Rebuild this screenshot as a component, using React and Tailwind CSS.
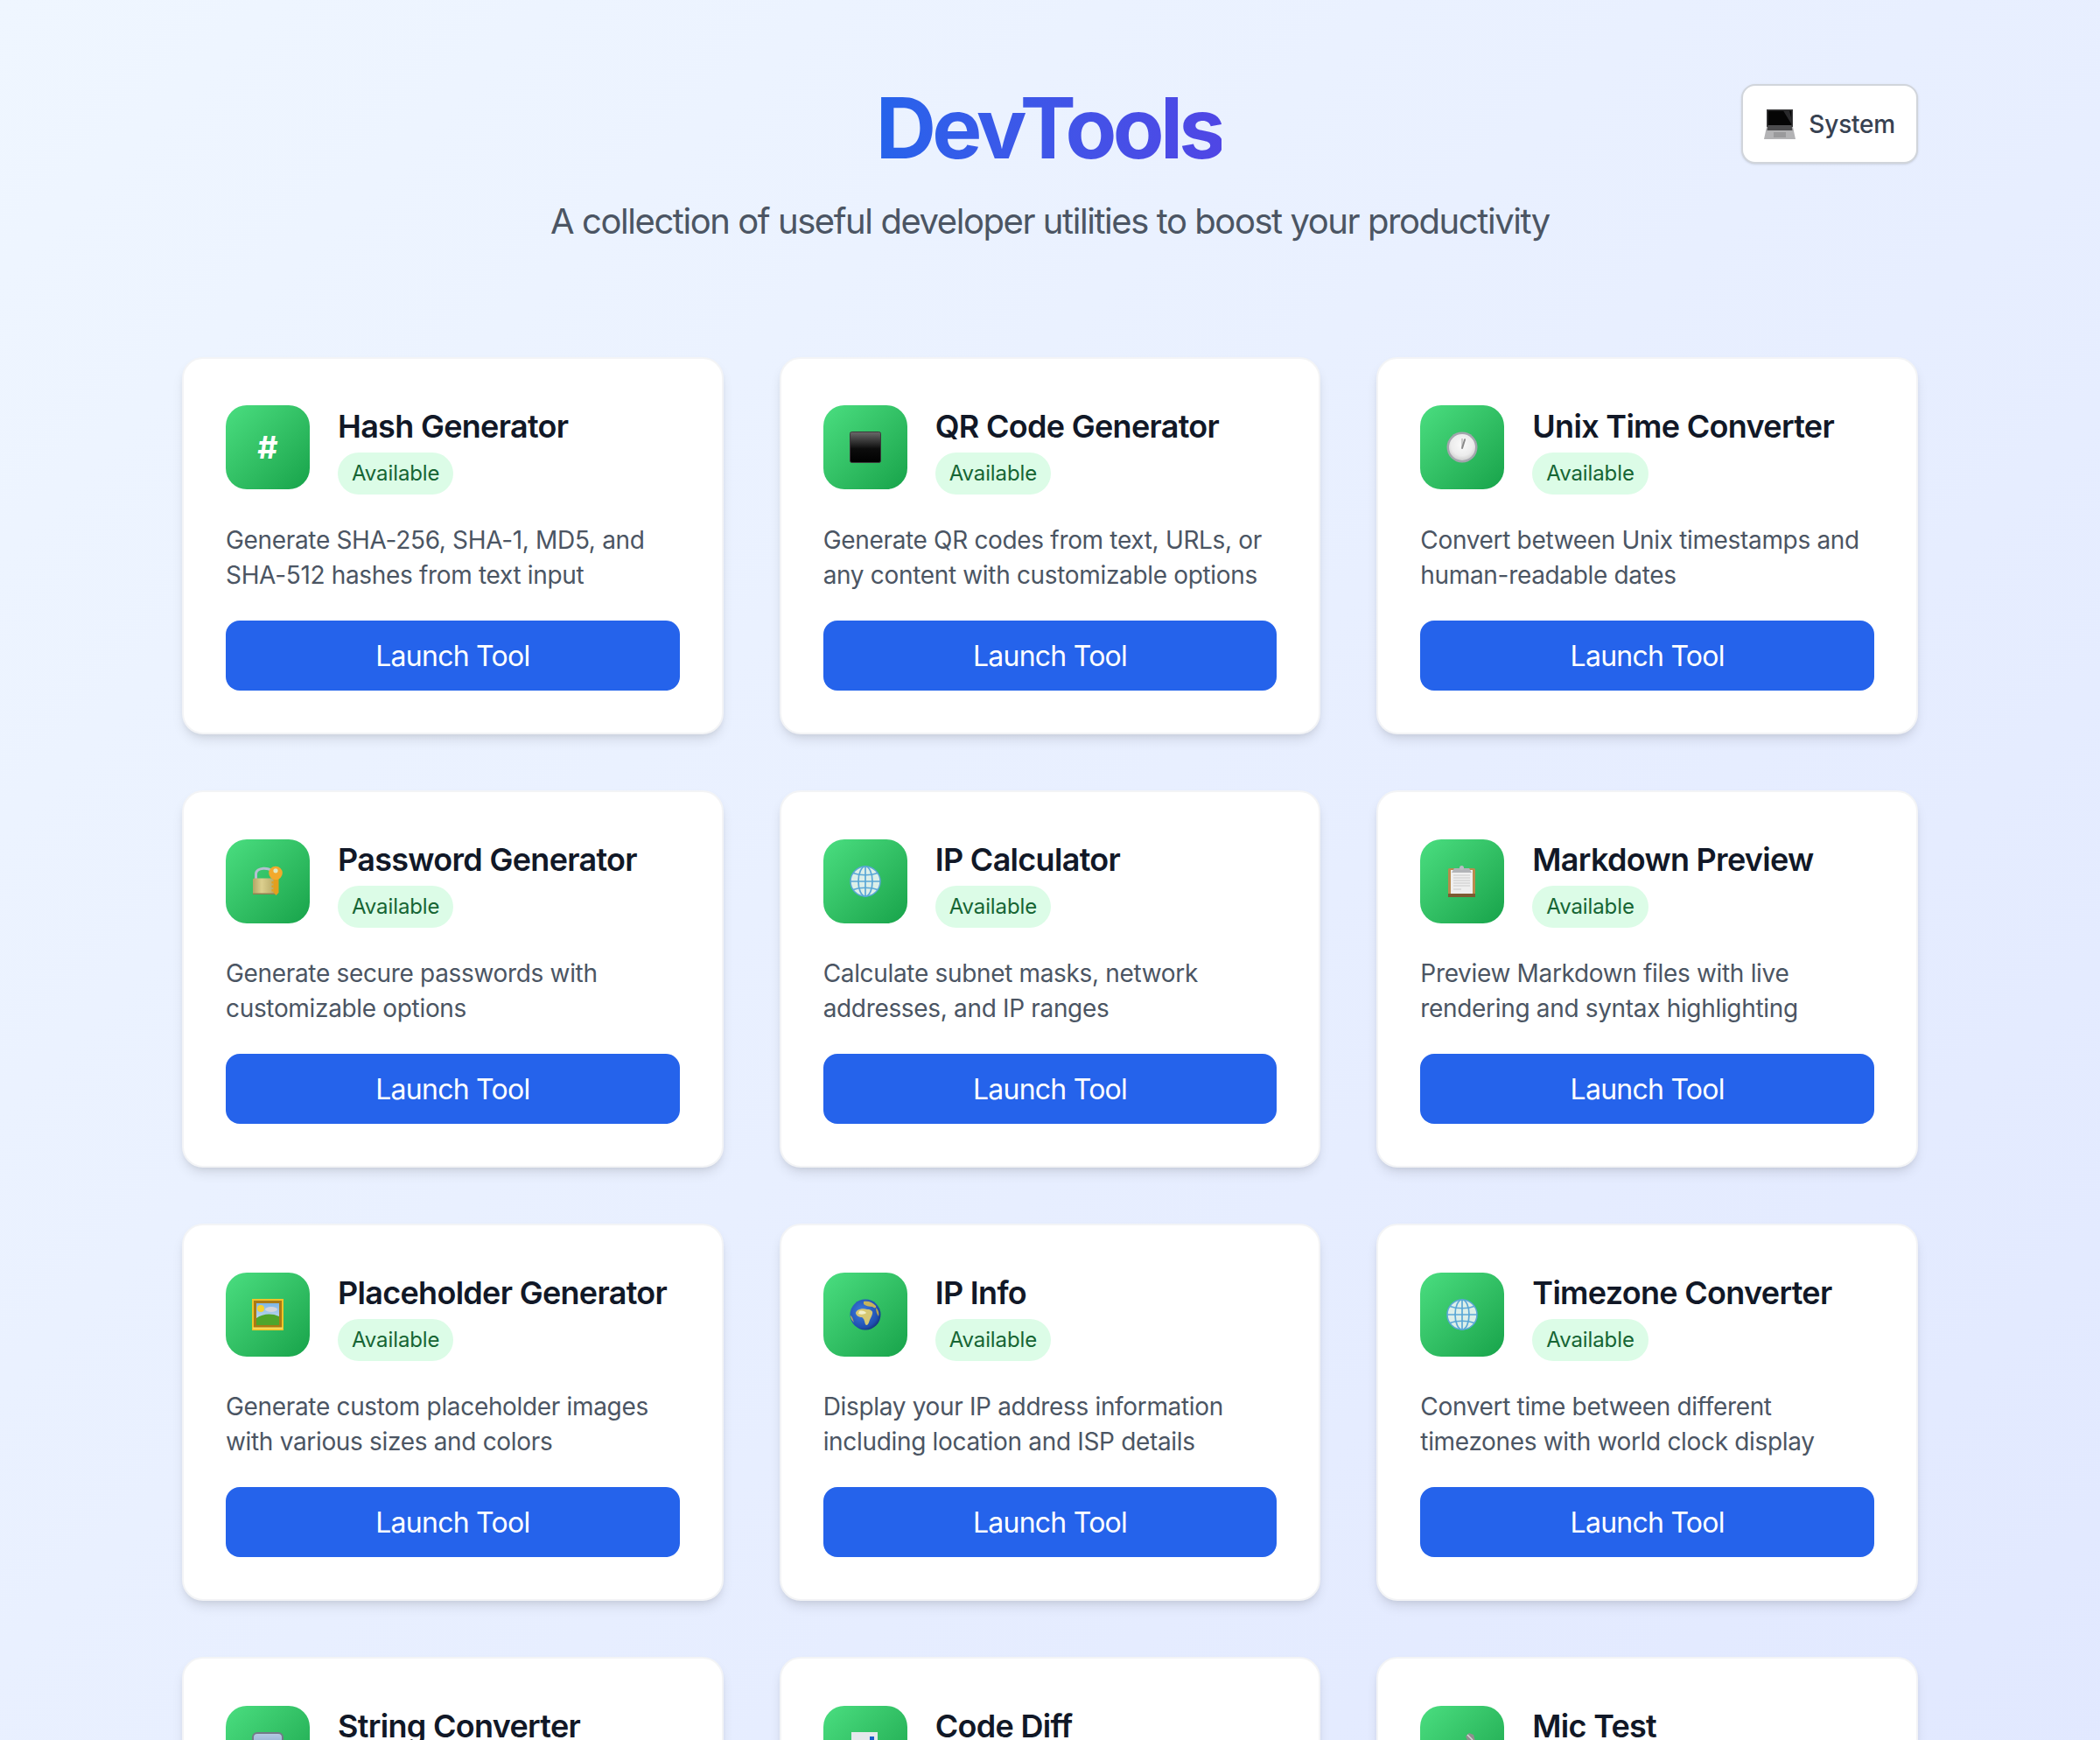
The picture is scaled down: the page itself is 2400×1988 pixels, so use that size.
// Apple-style emoji drawn by hand, all on a 36 box
const BlackSquare = () => (
  <svg width="36" height="36" viewBox="0 0 36 36">
    <defs>
      <linearGradient id="sq" x1="0" y1="0" x2="0" y2="1">
        <stop offset="0" stopColor="#6a6a6a" />
        <stop offset="0.55" stopColor="#0c0c0c" />
        <stop offset="1" stopColor="#000" />
      </linearGradient>
    </defs>
    <rect x="0.5" y="0.5" width="35" height="35" rx="2" fill="url(#sq)" stroke="#3a3a3a" />
  </svg>
);

const Clock = () => (
  <svg width="36" height="36" viewBox="0 0 36 36">
    <defs>
      <radialGradient id="face" cx="0.5" cy="0.4" r="0.6">
        <stop offset="0" stopColor="#fbfbfb" />
        <stop offset="0.7" stopColor="#ececec" />
        <stop offset="1" stopColor="#cfcfcf" />
      </radialGradient>
    </defs>
    <circle cx="18" cy="18" r="17.5" fill="#a3a5ad" />
    <circle cx="18" cy="18" r="15" fill="url(#face)" />
    <path d="M18 18 L18 8" stroke="#8d8d8d" strokeWidth="0.8" />
    <path d="M18 19 L21.5 9.5" stroke="#8a8a8a" strokeWidth="2" strokeLinecap="round" transform="rotate(-3 18 18)" />
  </svg>
);

const LockKey = () => (
  <svg width="36" height="36" viewBox="0 0 36 36">
    <defs>
      <linearGradient id="lockBody" x1="0" y1="0" x2="1" y2="0">
        <stop offset="0" stopColor="#b3a566" />
        <stop offset="0.4" stopColor="#dccf8e" />
        <stop offset="1" stopColor="#b6a867" />
      </linearGradient>
    </defs>
    <path d="M4.500 15 V9.500 C4.500 1.500 21 1.500 22 7" fill="none" stroke="#b5bfd0" strokeWidth="3" />
    <rect x="1" y="14.500" width="25" height="18.500" rx="1.500" fill="url(#lockBody)" />
    <rect x="1" y="31.500" width="25" height="1.500" fill="#8b8152" />
    <path d="M24.500 14 V30.500 L27.500 34 L30.500 31 V14 Z" fill="#e39f1e" />
    <path d="M24.500 18 h-2 v2.500 h2 v2 h-2 v2.500 h2 v2 h-2 v2.500 h2 Z" fill="#e39f1e" />
    <circle cx="27" cy="8.500" r="7.800" fill="#f2a92c" />
    <circle cx="27" cy="5.800" r="2.600" fill="#dfe9c2" />
  </svg>
);

const Globe = () => (
  <svg width="36" height="36" viewBox="0 0 36 36">
    <circle cx="18" cy="18" r="17" fill="#dcefe9" stroke="#5aa7d6" strokeWidth="1.500" />
    <g fill="none" stroke="#5aa7d6" strokeWidth="1.700">
      <ellipse cx="18" cy="18" rx="8" ry="17" />
      <path d="M18 1 V35" />
      <path d="M1 18 H35" />
      <path d="M4 8.500 C12 11.500 24 11.500 32 8.500" />
      <path d="M4 27.500 C12 24.500 24 24.500 32 27.500" />
    </g>
  </svg>
);

const Clipboard = () => (
  <svg width="36" height="36" viewBox="0 0 36 36">
    <rect x="2" y="3" width="31" height="33" rx="1.500" fill="#b98b4d" />
    <rect x="2" y="32" width="31" height="4" fill="#7d5a32" />
    <rect x="5" y="5" width="25" height="27" fill="#efefef" />
    <path d="M8 11 H27 M8 14 H27 M8 17 H27 M8 20 H27 M8 23 H27 M8 27 H17" stroke="#c9c9c9" strokeWidth="1" />
    <path d="M6 8 L9 3 H26 L29 8 Z" fill="#b2b4b8" />
    <circle cx="17.500" cy="2.500" r="2.500" fill="#b8bcc4" />
  </svg>
);

const Picture = () => (
  <svg width="36" height="36" viewBox="0 0 36 36">
    <defs>
      <linearGradient id="sky" x1="0" y1="0" x2="0" y2="1">
        <stop offset="0" stopColor="#7fb6e6" />
        <stop offset="1" stopColor="#d9e4ee" />
      </linearGradient>
    </defs>
    <rect width="36" height="36" fill="#f0c328" />
    <rect x="2" y="2" width="32" height="31" fill="#a97a14" />
    <rect x="5" y="5" width="26" height="25" fill="url(#sky)" />
    <circle cx="10" cy="11" r="4" fill="#f6d32d" />
    <ellipse cx="22" cy="12" rx="7" ry="3" fill="#d5d6dd" />
    <path d="M5 22 C12 17 22 16 31 20 V30 H5 Z" fill="#4fa52c" />
    <rect x="1" y="32.500" width="34" height="2" fill="#f8dc5e" />
  </svg>
);

const Earth = () => (
  <svg width="36" height="36" viewBox="0 0 36 36">
    <defs>
      <radialGradient id="sea" cx="0.4" cy="0.4" r="0.65">
        <stop offset="0" stopColor="#3f7fe0" />
        <stop offset="0.8" stopColor="#1f4fb0" />
        <stop offset="1" stopColor="#14337a" />
      </radialGradient>
    </defs>
    <circle cx="18" cy="18" r="17.500" fill="url(#sea)" />
    <path d="M9 13 C12 11 17 11 20 12 C24 12 27 14 26 17 C25 21 23 23 22 27 C21 30 19 31 18 29 C17 26 17 23 14 21 C11 21 7 19 7 16 C7 15 8 14 9 13 Z" fill="#d6c873" />
    <path d="M11 14 C14 13 18 14 19 16 C17 18 13 18 10 17 Z" fill="#f2efc8" />
    <path d="M16 3 C20 2 26 3 30 8 C31 11 28 11 26 9 C22 9 18 8 16 6 Z" fill="#c6b45c" />
    <path d="M1 19 C3 20 4 24 5 27 C3 25 1 22 1 19 Z" fill="#c6b45c" />
    <path d="M30 10 C33 13 34 16 33 20 C31 17 30 14 30 10 Z" fill="#b5a44f" />
  </svg>
);

const Letters = () => (
  <svg width="36" height="36" viewBox="0 0 36 36">
    <defs>
      <linearGradient id="let" x1="0" y1="0" x2="0" y2="1">
        <stop offset="0" stopColor="#b6cbe4" />
        <stop offset="1" stopColor="#5f86b8" />
      </linearGradient>
    </defs>
    <rect x="1" y="1" width="34" height="34" rx="5" fill="url(#let)" stroke="#727a88" strokeWidth="2" />
  </svg>
);

const BarChart = () => (
  <svg width="36" height="36" viewBox="0 0 36 36">
    <rect x="2" y="0" width="30" height="36" fill="#e6e8ec" />
    <rect x="23" y="5" width="5" height="28" fill="#1a5fc8" />
  </svg>
);

const Mic = () => (
  <svg width="36" height="36" viewBox="0 0 36 36">
    <path d="M22 5 L26 1 L31 3 L33 10 L26 14 Z" fill="#8f8f8f" />
    <path d="M24 3 L30 9" stroke="#d6d6d6" strokeWidth="1.500" />
    <path d="M24 12 L6 33" stroke="#4a4a4a" strokeWidth="5" />
  </svg>
);

const LaptopEmoji = () => (
  <svg width="36" height="36" viewBox="0 0 36 36">
    <path d="M3 1 H33 V24 H3 Z" fill="#3c3c3e" />
    <path d="M4.500 2.500 H31.500 V21 H4.500 Z" fill="#050505" />
    <path d="M22 2.500 H29 L31.500 12 V18 Z" fill="#2a2a2c" />
    <path d="M3 21 H33 L36 35 H0 Z" fill="#b3b3b5" />
    <path d="M4.500 19 H31.500 L32.500 25 H3.500 Z" fill="#4c4c4e" />
    <rect x="11" y="27" width="14" height="6" fill="#9a9a9c" />
  </svg>
);

const tools = [
  { name: "Hash Generator", desc: ["Generate SHA-256, SHA-1, MD5, and", "SHA-512 hashes from text input"], icon: <span className="text-[36px] leading-none font-bold text-white">#</span> },
  { name: "QR Code Generator", desc: ["Generate QR codes from text, URLs, or", "any content with customizable options"], icon: <BlackSquare /> },
  { name: "Unix Time Converter", desc: ["Convert between Unix timestamps and", "human-readable dates"], icon: <Clock /> },
  { name: "Password Generator", desc: ["Generate secure passwords with", "customizable options"], icon: <LockKey /> },
  { name: "IP Calculator", desc: ["Calculate subnet masks, network", "addresses, and IP ranges"], icon: <Globe /> },
  { name: "Markdown Preview", desc: ["Preview Markdown files with live", "rendering and syntax highlighting"], icon: <Clipboard /> },
  { name: "Placeholder Generator", desc: ["Generate custom placeholder images", "with various sizes and colors"], icon: <Picture /> },
  { name: "IP Info", desc: ["Display your IP address information", "including location and ISP details"], icon: <Earth /> },
  { name: "Timezone Converter", desc: ["Convert time between different", "timezones with world clock display"], icon: <Globe /> },
  { name: "String Converter", desc: ["Convert strings between different", "formats and encodings"], icon: <Letters /> },
  { name: "Code Diff", desc: ["Compare two pieces of code", "and highlight the differences"], icon: <BarChart /> },
  { name: "Mic Test", desc: ["Test your microphone input", "with a live level meter"], icon: <Mic /> },
];

const ToolCard = ({ tool }) => (
  <div className="bg-white border-2 border-[#f3f4f6] rounded-3xl p-12 shadow-[0_8px_14px_-2px_rgba(0,0,0,0.1),0_4px_6px_-2px_rgba(0,0,0,0.06)]">
    <div className="flex items-center gap-8 mb-8">
      <div className="w-24 h-24 shrink-0 rounded-3xl bg-gradient-to-br from-[#4ade80] to-[#16a34a] flex items-center justify-center">
        {tool.icon}
      </div>
      <div className="flex flex-col items-start gap-[1.3px]">
        <h3 className="text-[36px] leading-[58px] font-semibold text-[#111827] tracking-[-0.7px] whitespace-nowrap">{tool.name}</h3>
        <span className="px-4 py-2 rounded-full bg-[#dcfce7] text-[#166534] text-2xl leading-8 tracking-[-0.1px]">Available</span>
      </div>
    </div>
    <p className="text-[28px] leading-10 text-[#4b5563] tracking-[-0.33px] mb-8 whitespace-nowrap">
      {tool.desc[0]}
      <br />
      {tool.desc[1]}
    </p>
    <button className="w-full h-20 pt-[2px] rounded-2xl bg-[#2563eb] text-white text-[32px] tracking-[-0.75px]">Launch Tool</button>
  </div>
);

const App = () => {
  return (
    <div className="h-screen overflow-hidden font-['Inter',sans-serif]">
      <div className="min-h-screen bg-gradient-to-br from-[#eff6ff] to-[#e0e7ff] pb-16">
        <div className="w-[1984px] mx-auto pt-24">
          {/* Header */}
          <div className="relative text-center mb-[126.6px]">
            <button className="absolute top-0 right-0 h-[91px] flex items-center gap-[15px] px-6 bg-white border-2 border-[#d1d5db] rounded-2xl shadow-sm text-[28px] font-medium text-[#374151] tracking-[-0.2px]">
              <span className="w-9 h-9 flex items-center justify-center"><LaptopEmoji /></span>
              System
            </button>
            <h1 className="text-8xl leading-24 font-bold tracking-[-4.7px] pt-[2px] mb-[31px] pr-[3px]">
              <span className="bg-gradient-to-r from-[#2563eb] to-[#4f46e5] bg-clip-text text-transparent">DevTools</span>
            </h1>
            <p className="text-[40px] leading-14 text-[#4b5563] tracking-[-1.44px]">A collection of useful developer utilities to boost your productivity</p>
          </div>

          {/* Tools grid */}
          <div className="grid grid-cols-3 gap-16">
            {tools.map((tool) => (
              <ToolCard key={tool.name} tool={tool} />
            ))}
          </div>
        </div>
      </div>
    </div>
  );
};

export default App;
